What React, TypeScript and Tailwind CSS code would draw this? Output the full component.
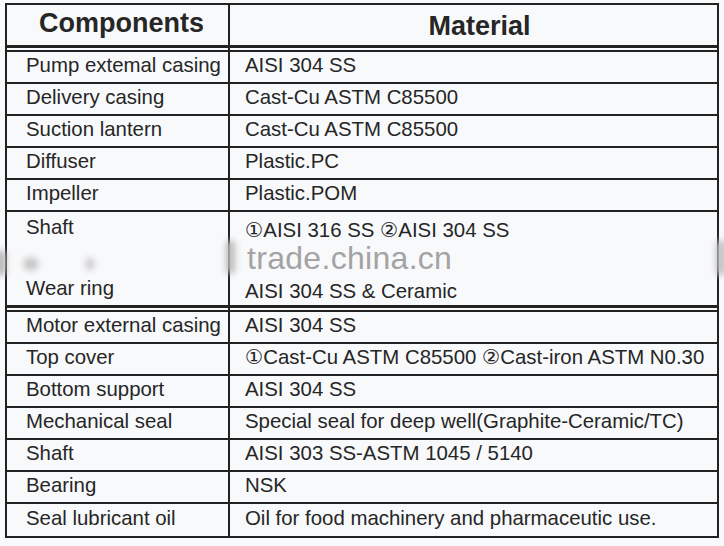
import React from 'react';

const upperRows: [string, string][] = [
  ['Pump extemal casing', 'AISI 304 SS'],
  ['Delivery casing', 'Cast-Cu ASTM C85500'],
  ['Suction lantern', 'Cast-Cu ASTM C85500'],
  ['Diffuser', 'Plastic.PC'],
  ['Impeller', 'Plastic.POM'],
];

const lowerRows: [string, string][] = [
  ['Motor external casing', 'AISI 304 SS'],
  ['Top cover', '①Cast-Cu ASTM C85500 ②Cast-iron ASTM N0.30'],
  ['Bottom support', 'AISI 304 SS'],
  ['Mechanical seal', 'Special seal for deep well(Graphite-Ceramic/TC)'],
  ['Shaft', 'AISI 303 SS-ASTM 1045 / 5140'],
  ['Bearing', 'NSK'],
  ['Seal lubricant oil', 'Oil for food machinery and pharmaceutic use.'],
];

function Row({ part, material, last }: { part: string; material: string; last?: boolean }) {
  return (
    <div className={`flex h-[32px] ${last ? '' : 'border-b-2 border-[#222]'}`}>
      <div className="w-[223px] shrink-0 border-r-2 border-[#222] pl-[19px] flex items-center pb-[3px] whitespace-nowrap">
        {part}
      </div>
      <div className="flex-1 pl-[15px] flex items-center pb-[3px] whitespace-nowrap">{material}</div>
    </div>
  );
}

export default function App() {
  return (
    <div
      className="relative w-[724px] h-[546px] bg-[#f8f9fb] overflow-hidden text-[#262626]"
      style={{ fontFamily: "'Liberation Sans', Arial, 'DejaVu Sans', sans-serif" }}
    >
      <div className="pt-[3px] pl-[5px]">
        <div className="w-[714px] border-2 border-[#222] text-[20.4px] leading-none">
          {/* Header */}
          <div className="flex h-[43px] border-b-[3px] border-[#222] text-[27px] font-bold">
            <div className="w-[223px] shrink-0 border-r-2 border-[#222] flex items-center justify-center pl-[8px] pb-[4px]">
              Components
            </div>
            <div className="flex-1 flex items-center justify-center pl-[12px] pt-[2px]">Material</div>
          </div>
          <div className="flex h-[2px]">
            <div className="w-[223px] shrink-0 border-r-2 border-[#222]" />
          </div>
          <div className="border-t-2 border-[#222]">
            {upperRows.map(([p, m]) => (
              <Row key={p} part={p} material={m} />
            ))}
            {/* Shaft / wear ring merged block */}
            <div className="flex h-[96px] border-b-[3px] border-[#222]">
              <div className="w-[223px] shrink-0 border-r-2 border-[#222] pl-[19px] flex flex-col justify-between pt-[5px] pb-[7px]">
                <span>Shaft</span>
                <span>Wear ring</span>
              </div>
              <div className="flex-1 pl-[15px] flex flex-col justify-between pt-[8px] pb-[4px]">
                <span>①AISI 316 SS ②AISI 304 SS</span>
                <span>AISI 304 SS &amp; Ceramic</span>
              </div>
            </div>
          </div>
          <div className="flex h-[2px]">
            <div className="w-[223px] shrink-0 border-r-2 border-[#222]" />
          </div>
          <div className="border-t-2 border-[#222]">
            {lowerRows.map(([p, m], i) => (
              <Row key={p + i} part={p} material={m} last={i === lowerRows.length - 1} />
            ))}
          </div>
        </div>
      </div>

      {/* watermark */}
      <div className="absolute left-[247px] top-[242px] text-[32px] leading-none text-[#a3a3a3] tracking-[0.3px]">
        trade.china.cn
      </div>

      {/* scan smudges */}
      <div className="absolute left-[-4px] top-[250px] w-[10px] h-[26px] rounded-full bg-[#b9b9b9] blur-[3px]" />
      <div className="absolute left-[24px] top-[258px] w-[14px] h-[12px] rounded bg-[#c4c4c4] blur-[3px]" />
      <div className="absolute left-[86px] top-[258px] w-[8px] h-[12px] rounded bg-[#c8c8c8] blur-[3px]" />
      <div className="absolute left-[226px] top-[240px] w-[9px] h-[34px] rounded-full bg-[#bcbcbc] blur-[3px]" />
      <div className="absolute left-[716px] top-[240px] w-[10px] h-[36px] rounded-full bg-[#c2c2c2] blur-[3px]" />
    </div>
  );
}
